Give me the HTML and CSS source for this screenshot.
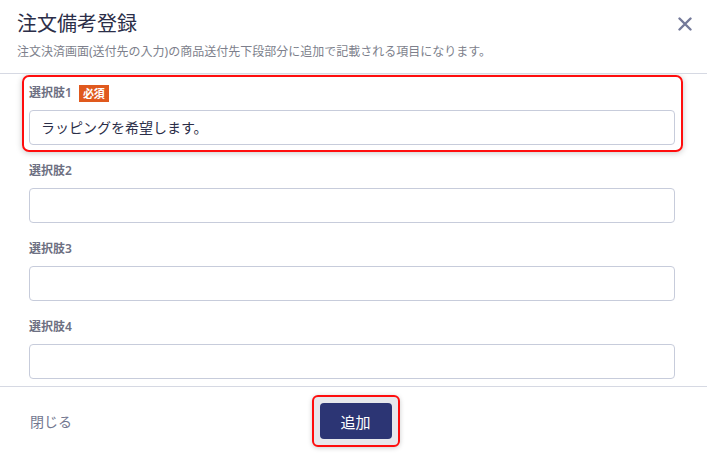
FILE: index.html
```html
<!DOCTYPE html>
<html lang="ja">
<head>
<meta charset="utf-8">
<link rel="stylesheet" href="styles.css">
</head>
<body>
<div class="modal">
  <header class="modal-header">
    <div class="head-text">
      <h1 class="title">注文備考登録</h1>
      <p class="subtitle">注文決済画面(送付先の入力)の商品送付先下段部分に追加で記載される項目になります。</p>
    </div>
    <button class="close" aria-label="close">
      <svg width="14" height="14" viewBox="0 0 14 14"><path d="M1.5 1.5 L12.5 12.5 M12.5 1.5 L1.5 12.5" stroke="#747a9a" stroke-width="2.4" stroke-linecap="round"/></svg>
    </button>
  </header>
  <main class="modal-body">
    <div class="field highlighted">
      <div class="label-row"><span class="label">選択肢1</span><span class="badge">必須</span></div>
      <div class="input">ラッピングを希望します。</div>
    </div>
    <div class="field">
      <div class="label-row"><span class="label">選択肢2</span></div>
      <div class="input"></div>
    </div>
    <div class="field">
      <div class="label-row"><span class="label">選択肢3</span></div>
      <div class="input"></div>
    </div>
    <div class="field">
      <div class="label-row"><span class="label">選択肢4</span></div>
      <div class="input"></div>
    </div>
  </main>
  <footer class="modal-footer">
    <span class="close-link">閉じる</span>
    <span class="btn-ring"><button class="btn-primary">追加</button></span>
    <span></span>
  </footer>
</div>
</body>
</html>
```
FILE: styles.css
```css
* { box-sizing: border-box; }
html, body {
  margin: 0;
  padding: 0;
  height: 453px;
  overflow: hidden;
  background: #ffffff;
  font-family: "Noto Sans", "Noto Sans CJK JP", sans-serif;
}
.modal {
  width: 707px;
  height: 453px;
  display: flex;
  flex-direction: column;
}
.modal-header {
  display: flex;
  justify-content: space-between;
  align-items: flex-start;
  padding: 10px 15px 0 17px;
  height: 74px;
  border-bottom: 1px solid #d6d9e3;
}
.title {
  margin: 0;
  font-size: 20px;
  font-weight: 400;
  line-height: 28px;
  color: #2b2e48;
}
.subtitle {
  margin: 5px 0 0 0;
  font-size: 12px;
  line-height: 18px;
  color: #7d7f8c;
}
.close {
  border: 0;
  background: none;
  padding: 0;
  margin-top: 7px;
  width: 14px;
  height: 14px;
  display: flex;
}
.modal-body {
  height: 313px;
  overflow: hidden;
  padding: 10px 32px 0 29px;
  border-bottom: 1px solid #d6d9e3;
}
.field {
  margin-bottom: 17px;
}
.highlighted {
  position: relative;
}
.highlighted::after {
  content: "";
  position: absolute;
  top: -9px;
  left: -7px;
  right: -8px;
  bottom: -7px;
  border: 2px solid #ff0d0d;
  border-radius: 7px;
  box-shadow: 0 1px 6px rgba(0, 0, 0, 0.22);
  pointer-events: none;
}
.label-row {
  display: flex;
  align-items: center;
  height: 18px;
  margin-bottom: 8px;
}
.label {
  font-size: 12px;
  font-weight: 600;
  color: #6d7082;
  line-height: 18px;
}
.badge {
  margin-left: 7px;
  background: #e0591d;
  color: #ffffff;
  font-size: 11px;
  font-weight: 700;
  line-height: 17px;
  height: 17px;
  padding: 0 4px;
}
.input {
  height: 35px;
  border: 1px solid #c7ccdb;
  border-radius: 4px;
  padding: 0 11px;
  font-size: 14px;
  line-height: 33px;
  color: #2b2e48;
  background: #fff;
}
.modal-footer {
  flex: 1;
  display: grid;
  grid-template-columns: 1fr auto 1fr;
  align-items: center;
  padding: 2px 26px 0 30px;
}
.close-link {
  font-size: 14px;
  color: #737890;
}
.btn-ring {
  display: inline-flex;
  padding: 6px;
  border: 2px solid #ff0d0d;
  border-radius: 6px;
  background: #e7e8ec;
  box-shadow: 0 1px 5px rgba(0, 0, 0, 0.2);
}
.btn-primary {
  border: 0;
  width: 72px;
  height: 36px;
  border-radius: 4px;
  background: #2c3574;
  color: #ffffff;
  font-family: "Noto Sans", "Noto Sans CJK JP", sans-serif;
  font-size: 15px;
  padding: 0;
}
```
